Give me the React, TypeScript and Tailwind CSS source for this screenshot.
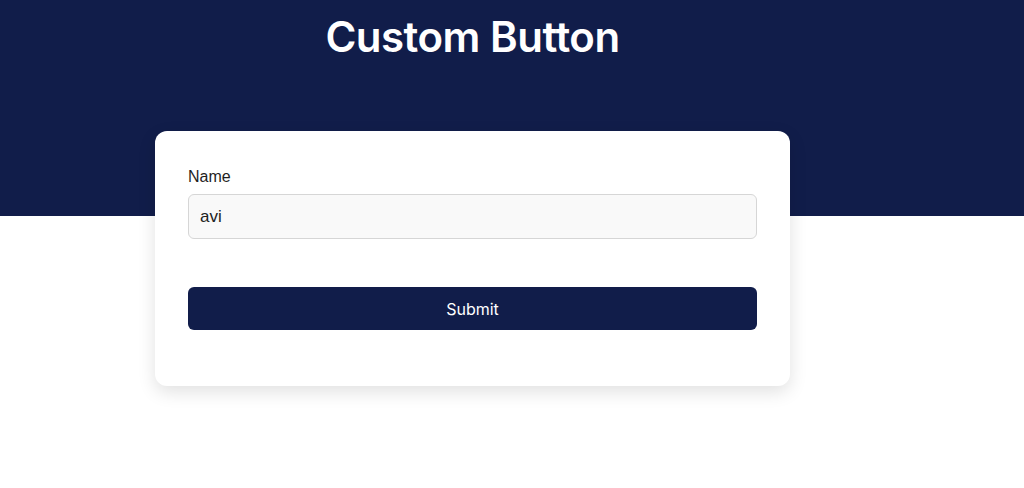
export default function App() {
  return (
    <div className="relative min-h-[488px] w-[1024px] bg-white">
      <div className="h-[216px] bg-[#111d4a]">
        <div className="ml-[155px] w-[635px] pt-[9px] text-center">
          <h1 className="font-['Inter',sans-serif] text-[42px] font-semibold leading-[56px] tracking-[-0.5px] text-white">
            Custom Button
          </h1>
        </div>
      </div>
      <div className="-mt-[85px] ml-[155px] w-[635px] rounded-xl bg-white px-[33px] pb-[56px] pt-[36px] shadow-[0_6px_18px_rgba(0,0,0,0.12)]">
        <label className="block font-['Liberation_Sans',sans-serif] text-[16px] leading-[20px] text-[#1f1f1f]">
          Name
        </label>
        <input
          defaultValue="avi"
          className="mt-[7px] block h-[45px] w-full rounded-md border border-[#d6d6d6] bg-[#f9f9f9] px-[11px] font-['Liberation_Sans',sans-serif] text-[17px] text-[#222] outline-none"
        />
        <button className="mt-[48px] block h-[43px] w-full rounded-md bg-[#111d4a] font-['Inter',sans-serif] text-[16px] text-white">
          Submit
        </button>
      </div>
    </div>
  );
}
